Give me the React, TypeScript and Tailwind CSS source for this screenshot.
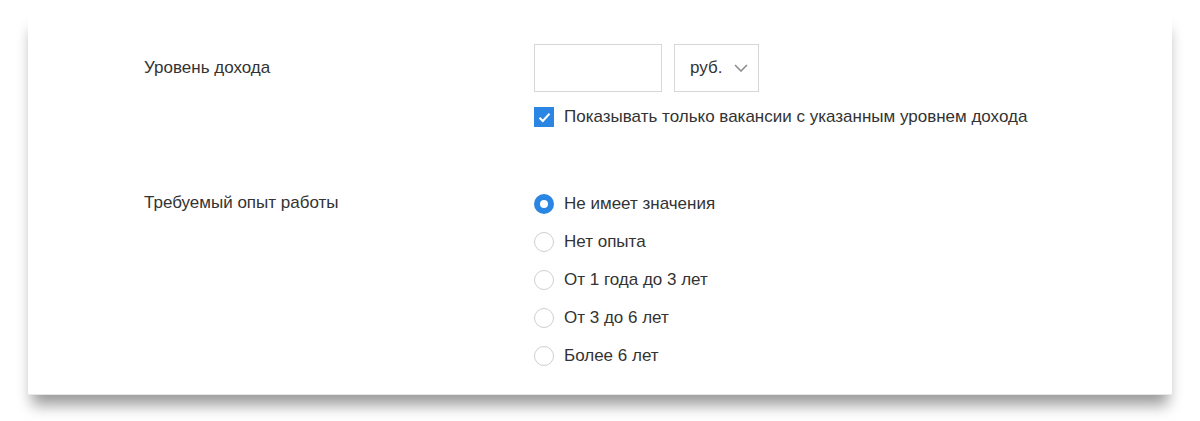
import { useState } from "react";

const options = [
    'Не имеет значения',
    'Нет опыта',
    'От 1 года до 3 лет',
    'От 3 до 6 лет',
    'Более 6 лет',
];

function Radio({ checked }: { checked: boolean }) {
    if (checked)
        return (
            <span className="flex items-center justify-center w-5 h-5 rounded-full bg-[#2a86e2]">
                <span className="w-2 h-2 rounded-full bg-white" />
            </span>
        )

    return <span className="w-5 h-5 rounded-full border border-[#cfcfcf] bg-white" />
}

export default function App() {
    const [onlySalary, setOnlySalary] = useState(true);
    const [experience, setExperience] = useState(0);

    return (
        <div className="h-[421px] bg-white px-[28px] pt-[12px] font-[Liberation_Sans,Arial,sans-serif] text-[17px] text-[#333]">
            <div className="bg-white pl-[116px] pt-[32px] pb-[19px] border-b border-[#e6e6e6] shadow-[0_14px_14px_-4px_rgba(0,0,0,0.4)]">
                {/* income */}
                <div className="flex">
                    <div className="w-[390px] leading-[48px]">Уровень дохода</div>
                    <div className="flex flex-col">
                        <div className="flex gap-3">
                            <input className="w-[128px] h-12 border border-[#d6d6d6] px-3 outline-none" />
                            <button className="w-[85px] h-12 border border-[#d6d6d6] flex items-center pl-[15px] gap-[12px]">
                                <span>руб.</span>
                                <svg width="14" height="8" viewBox="0 0 14 8" fill="none">
                                    <polyline points="1,1 7,7 13,1" stroke="#8e8e8e" strokeWidth="1.6" />
                                </svg>
                            </button>
                        </div>

                        <label onClick={() => setOnlySalary(!onlySalary)}
                            className="flex items-center gap-[10px] mt-[15px] h-5 cursor-pointer"
                        >
                            <span className={`flex items-center justify-center w-5 h-5 ${onlySalary ? 'bg-[#2a86e2]' : 'border border-[#cfcfcf]'}`}>
                                {onlySalary && (
                                    <svg width="13" height="11" viewBox="0 0 13 11" fill="none">
                                        <polyline points="1.5,5.8 4.8,9 11.5,1.8" stroke="white" strokeWidth="2" />
                                    </svg>
                                )}
                            </span>
                            <span>Показывать только вакансии с указанным уровнем дохода</span>
                        </label>
                    </div>
                </div>

                {/* experience */}
                <div className="flex mt-[58px]">
                    <div className="w-[390px] leading-[36px]">Требуемый опыт работы</div>
                    <div className="flex flex-col">
                        {options.map((opt, i) => (
                            <div key={opt} onClick={() => setExperience(i)}
                                className="flex items-center gap-[10px] h-[38px] cursor-pointer"
                            >
                                <Radio checked={experience === i} />
                                <span>{opt}</span>
                            </div>
                        ))}
                    </div>
                </div>
            </div>
        </div>
    )
}
